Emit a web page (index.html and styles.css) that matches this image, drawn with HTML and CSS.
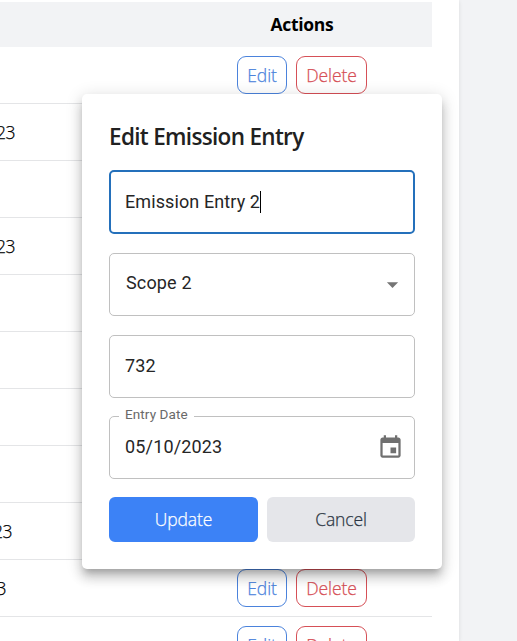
FILE: index.html
```html
<!DOCTYPE html>
<html lang="en">
<head>
<meta charset="utf-8">
<title>Emission Entries</title>
<link rel="stylesheet" href="styles.css">
</head>
<body>
<main class="panel">
  <div class="table">
    <div class="head"><span>Actions</span></div>
    <div class="row"><div class="actions"><button class="btn edit"><span>Edit</span></button><button class="btn delete"><span>Delete</span></button></div></div>
    <div class="row"><span class="date">23</span></div>
    <div class="row"></div>
    <div class="row"><span class="date">23</span></div>
    <div class="row"></div>
    <div class="row"></div>
    <div class="row"></div>
    <div class="row"></div>
    <div class="row"><span class="date date-mid">23</span></div>
    <div class="row"><span class="date date-short">3</span><div class="actions"><button class="btn edit"><span>Edit</span></button><button class="btn delete"><span>Delete</span></button></div></div>
    <div class="row"><div class="actions"><button class="btn edit"><span>Edit</span></button><button class="btn delete"><span>Delete</span></button></div></div>
  </div>
</main>
<section class="dialog" role="dialog" aria-label="Edit Emission Entry">
  <h2><span>Edit Emission Entry</span></h2>
  <div class="field focused"><span class="name">Emission Entry 2</span><i class="caret"></i></div>
  <div class="field select"><span>Scope 2</span>
    <svg class="arrow" viewBox="0 0 24 24"><path d="M7 10l5 5 5-5z"/></svg>
  </div>
  <div class="field amount"><span>732</span></div>
  <div class="field when"><label>Entry Date</label><span class="day">05/10/2023</span>
    <svg class="calendar" viewBox="0 0 24 24"><path d="M17 12h-5v5h5v-5zM16 1v2H8V1H6v2H5c-1.11 0-1.99.9-1.99 2L3 19c0 1.1.89 2 2 2h14c1.1 0 2-.9 2-2V5c0-1.1-.9-2-2-2h-1V1h-2zm3 18H5V8h14v11z"/></svg>
  </div>
  <div class="buttons"><button class="update">Update</button><button class="cancel">Cancel</button></div>
</section>
</body>
</html>
```

FILE: styles.css
```css
* { box-sizing: border-box; }
body {
  margin: 0;
  height: 641px;
  overflow: hidden;
  background: #f2f3f5;
  font-family: "Open Sans", "Noto Sans", sans-serif;
  font-size: 17.5px;
  font-weight: 350;
  color: #000;
}
button { font: inherit; margin: 0; padding: 0; }
.date, .btn, .buttons { -webkit-text-stroke: .25px currentColor; }
.panel {
  width: 459px;
  height: 641px;
  padding-top: 2px;
  overflow: hidden;
  background: #fff;
  box-shadow: 0 1px 4px rgba(0, 0, 0, .1);
}
.table { width: 432px; }
.head {
  height: 45px;
  padding: 0 0 2px 172px;
  background: #f2f3f5;
  display: flex;
  align-items: center;
  justify-content: center;
  font-weight: 700;
  letter-spacing: -.3px;
}
.row {
  height: 57px;
  border-bottom: 1px solid #e4e5e7;
  display: flex;
  align-items: center;
}
.date {
  width: 15px;
  height: 24px;
  line-height: 24px;
  display: flex;
  justify-content: flex-end;
  letter-spacing: -.5px;
}
.date-mid { width: 12px; }
.date-short { width: 6px; }
.actions {
  margin-left: auto;
  width: 195px;
  display: flex;
  gap: 9px;
}
.btn {
  height: 38px;
  border: 1px solid;
  border-radius: 9px;
  background: #fff;
  display: flex;
  align-items: center;
  justify-content: center;
}
.edit { width: 50px; color: #4b83dc; letter-spacing: -.1px; }
.delete { width: 71px; color: #d65057; letter-spacing: -.1px; }
.dialog {
  position: absolute;
  left: 82px;
  top: 94px;
  width: 360px;
  height: 475px;
  padding: 27px;
  background: #fff;
  border-radius: 5px;
  box-shadow: 0 6px 6px -3px rgba(0,0,0,.2), 0 9px 11px 1px rgba(0,0,0,.14), 0 3px 16px 2px rgba(0,0,0,.12);
}
h2 {
  margin: 0 0 17px;
  height: 32px;
  line-height: 32px;
  font-size: 22.5px;
  font-weight: 600;
  letter-spacing: -.68px;
  color: #212121;
}
.field {
  position: relative;
  height: 63px;
  border: 1px solid #c0c0c0;
  border-radius: 5px;
  padding: 0 15px 2px;
  display: flex;
  align-items: center;
  font: 18px/26px Roboto, sans-serif;
  letter-spacing: .16px;
  color: #262626;
}
.focused { height: 64px; border: 2px solid #2470bb; padding: 0 14px; letter-spacing: .1px; }
.caret { width: 1px; height: 22px; background: #000; }
.select { margin-top: 19px; padding: 0 8px 4px 16px; justify-content: space-between; }
.amount { margin-top: 19px; }
.when { margin-top: 18px; padding-right: 10px; justify-content: space-between; }
.arrow { width: 27px; height: 27px; margin-top: 4px; fill: #757575; }
.calendar { width: 27px; height: 27px; margin-top: 2px; fill: #707070; }
label {
  position: absolute;
  left: 9px;
  top: -13px;
  width: 75px;
  padding: 0 6px;
  background: #fff;
  white-space: nowrap;
  font-size: 13.5px;
  line-height: 20px;
  letter-spacing: .1px;
  color: #696969;
}
.buttons { margin-top: 18px; display: flex; gap: 9px; }
.buttons button { height: 45px; border: 0; border-radius: 6px; padding-bottom: 1px; letter-spacing: -.1px; }
.update { width: 149px; background: #3c82f6; color: #fff; }
.cancel { width: 148px; background: #e5e6ea; color: #2c3644; }
```
